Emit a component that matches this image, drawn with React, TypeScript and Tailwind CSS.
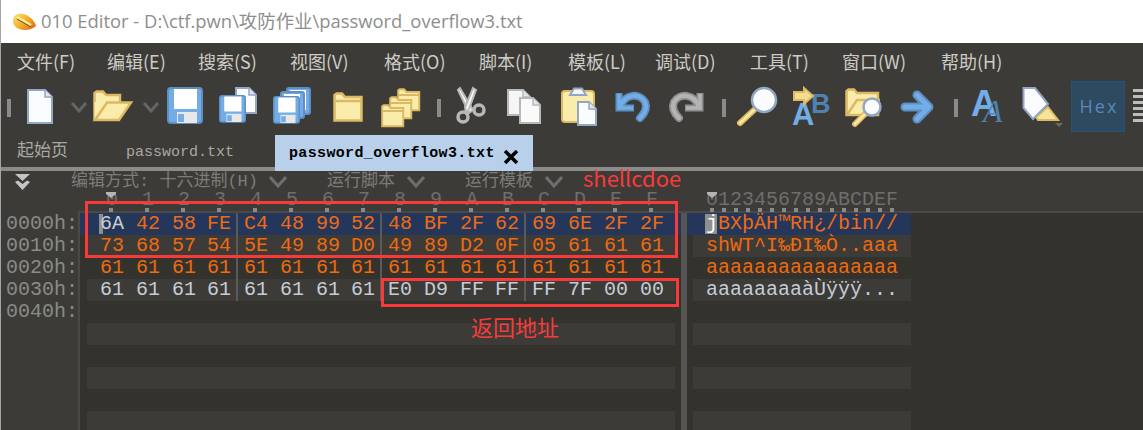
import React from 'react';

const menus = [
  { label: '文件(F)', w: 'w-[90px]' },
  { label: '编辑(E)', w: 'w-[91px]' },
  { label: '搜索(S)', w: 'w-[92px]' },
  { label: '视图(V)', w: 'w-[94px]' },
  { label: '格式(O)', w: 'w-[95px]' },
  { label: '脚本(I)', w: 'w-[89px]' },
  { label: '模板(L)', w: 'w-[87px]' },
  { label: '调试(D)', w: 'w-[95px]' },
  { label: '工具(T)', w: 'w-[92px]' },
  { label: '窗口(W)', w: 'w-[99px]' },
  { label: '帮助(H)', w: 'w-[70px]' },
];

const rows = [
  { addr: '0000h:', hex: '6A 42 58 FE C4 48 99 52 48 BF 2F 62 69 6E 2F 2F', ascii: 'jBXþÄH™RH¿/bin//' },
  { addr: '0010h:', hex: '73 68 57 54 5E 49 89 D0 49 89 D2 0F 05 61 61 61', ascii: 'shWT^I‰ÐI‰Ò..aaa' },
  { addr: '0020h:', hex: '61 61 61 61 61 61 61 61 61 61 61 61 61 61 61 61', ascii: 'aaaaaaaaaaaaaaaa' },
  { addr: '0030h:', hex: '61 61 61 61 61 61 61 61 E0 D9 FF FF FF 7F 00 00', ascii: 'aaaaaaaaàÙÿÿÿ...' },
  { addr: '0040h:', hex: '', ascii: '' },
  { addr: '', hex: '', ascii: '' },
  { addr: '', hex: '', ascii: '' },
  { addr: '', hex: '', ascii: '' },
  { addr: '', hex: '', ascii: '' },
  { addr: '', hex: '', ascii: '' },
];

const digits = '0123456789ABCDEF'.split('');
const mono = "font-['Liberation_Mono','Noto_Sans_CJK_SC',monospace]";

const BLUE = '#72ade8';
const BLUE_D = '#5e8fc0';
const YEL = '#faedab';
const YEL_D = '#dcb964';
const PAPER = '#fbfcff';
const PAPER_D = '#93a6c4';

const Icon: React.FC<{ w: number; className: string; children: React.ReactNode }> = ({ w, className, children }) => (
  <svg width={w} height={40} viewBox={`0 0 ${w} 40`} className={`shrink-0 overflow-visible ${className}`}>
    {children}
  </svg>
);

const Grip = ({ className }: { className: string }) => (
  <div className={`mt-[12px] h-[18px] w-[4px] shrink-0 bg-[#8a8a88] ${className}`} />
);

const Chevron = ({ className }: { className: string }) => (
  <Icon w={16} className={className}>
    <path d="M1 16 L8 24 L15 16" fill="none" stroke="#646462" strokeWidth="3" />
  </Icon>
);

const Disk = ({ x, y, s = 1 }: { x: number; y: number; s?: number }) => (
  <g transform={`translate(${x} ${y}) scale(${s})`}>
    <rect x="1" y="1" width="34" height="35" rx="3" fill={BLUE} stroke={BLUE_D} strokeWidth="2" />
    <rect x="7" y="2" width="23" height="20" fill="#fff" />
    <rect x="10" y="25" width="20" height="11" fill="#e8e8e8" />
    <rect x="11" y="27" width="6" height="8" fill={BLUE} />
  </g>
);

const Folder = ({ x, y, s = 1 }: { x: number; y: number; s?: number }) => (
  <path
    transform={`translate(${x} ${y}) scale(${s})`}
    d="M1.5 28.5 V3 L3.5 1.5 H9 L12 5 H28.5 V28.5 Z M1.5 9 H28.5"
    fill={YEL}
    stroke={YEL_D}
    strokeWidth="2.5"
  />
);

const Sheet = ({ x, y, w, h, fill, line }: { x: number; y: number; w: number; h: number; fill: string; line: string }) => (
  <g transform={`translate(${x} ${y})`}>
    <path d={`M1 1 H${w - 8} L${w - 1} 8 V${h - 1} H1 Z`} fill={fill} stroke={line} strokeWidth="2" />
    <path d={`M${w - 8} 1 V8 H${w - 1}`} fill="#dfe5ee" stroke={line} strokeWidth="1.5" />
  </g>
);

const Lens = ({ cx, cy, r, x1, y1, x2, y2 }: { cx: number; cy: number; r: number; x1: number; y1: number; x2: number; y2: number }) => (
  <g>
    <path d={`M${x1} ${y1} L${x2} ${y2}`} stroke={YEL_D} strokeWidth="6" strokeLinecap="round" />
    <path d={`M${x1} ${y1} L${x2} ${y2}`} stroke="#fbe79d" strokeWidth="3" strokeLinecap="round" />
    <circle cx={cx} cy={cy} r={r} fill={PAPER} stroke={PAPER_D} strokeWidth="2.5" />
  </g>
);

const Toolbar = () => (
  <div className="flex h-[56px] items-start pt-[8px]">
    <Grip className="ml-[6px]" />
    <Icon w={26} className="ml-[16px]">
      <Sheet x={0} y={2} w={26} h={35} fill={PAPER} line={PAPER_D} />
    </Icon>
    <Chevron className="ml-[18px]" />
    <Icon w={40} className="ml-[6px]">
      <path d="M1.5 33 V6 L3.5 4.5 H10 L13 8 H27 V15" fill={YEL} stroke={YEL_D} strokeWidth="2.5" />
      <path d="M1.5 33 V15 H27 V33 Z" fill={YEL} />
      <path d="M2 33 L14 15.5 H38 L26 33 Z" fill={YEL} stroke={YEL_D} strokeWidth="2.5" />
    </Icon>
    <Chevron className="ml-[10px]" />
    <Icon w={36} className="ml-[8px]">
      <Disk x={0} y={0} />
    </Icon>
    <Icon w={38} className="ml-[16px]">
      <Sheet x={16} y={0} w={22} h={27} fill={PAPER} line={PAPER_D} />
      <Disk x={0} y={8} s={0.75} />
    </Icon>
    <Icon w={38} className="ml-[16px]">
      <rect x="14" y="1" width="23" height="26" rx="2" fill={BLUE} stroke={BLUE_D} strokeWidth="2" />
      <rect x="17" y="3" width="16" height="20" fill="#fff" />
      <rect x="8" y="5" width="23" height="26" rx="2" fill={BLUE} stroke={BLUE_D} strokeWidth="2" />
      <rect x="11" y="7" width="16" height="20" fill="#fff" />
      <Disk x={0} y={9} s={0.75} />
    </Icon>
    <Icon w={30} className="ml-[22px]">
      <Folder x={0} y={5} />
    </Icon>
    <Icon w={40} className="ml-[18px]">
      <Folder x={16} y={1} s={0.78} />
      <Folder x={8} y={9} s={0.78} />
      <Folder x={0} y={17} s={0.78} />
    </Icon>
    <Grip className="ml-[16px]" />
    <Icon w={30} className="ml-[14px]">
      <path d="M3 3 L5 1 L18 23 L14 26 Z" fill="#f4f4f4" stroke="#b8b8b8" strokeWidth="2" />
      <path d="M18 1 L21 3 L14 22 L11 26 L10 20 Z" fill="#f4f4f4" stroke="#b8b8b8" strokeWidth="2" />
      <circle cx="8" cy="30" r="5" fill="none" stroke="#b8b8b8" strokeWidth="3.5" />
      <circle cx="24" cy="23" r="5" fill="none" stroke="#b8b8b8" strokeWidth="3.5" />
    </Icon>
    <Icon w={34} className="ml-[22px]">
      <Sheet x={0} y={2} w={24} h={27} fill="#f6f6f6" line="#b8b8b8" />
      <Sheet x={12} y={10} w={22} h={27} fill="#fafafa" line="#b8b8b8" />
    </Icon>
    <Icon w={36} className="ml-[20px]">
      <rect x="1" y="4" width="32" height="31" rx="3" fill={YEL} stroke={YEL_D} strokeWidth="2" />
      <path d="M9 8 L13 1.5 H21 L25 8 Z" fill="#f4f6fa" stroke={PAPER_D} strokeWidth="2" />
      <Sheet x={16} y={14} w={20} h={25} fill={PAPER} line={PAPER_D} />
    </Icon>
    <Icon w={35} className="ml-[18px]">
      <path d="M4 6 V21 H19" fill="none" stroke={BLUE_D} strokeWidth="7" />
      <path d="M5 20 C10 6 25 6 30 15 C33 22 29 27 25 31" fill="none" stroke={BLUE_D} strokeWidth="8" strokeLinecap="round" />
      <path d="M5 20 C10 6 25 6 30 15 C33 22 29 27 25 31" fill="none" stroke={BLUE} strokeWidth="4.5" strokeLinecap="round" />
      <path d="M4 7 V21 H18" fill="none" stroke={BLUE} strokeWidth="3.5" />
    </Icon>
    <Icon w={35} className="ml-[19px]">
      <path d="M31 6 V21 H16" fill="none" stroke="#8f8f8f" strokeWidth="7" />
      <path d="M30 20 C25 6 10 6 5 15 C2 22 6 27 10 31" fill="none" stroke="#8f8f8f" strokeWidth="8" strokeLinecap="round" />
      <path d="M30 20 C25 6 10 6 5 15 C2 22 6 27 10 31" fill="none" stroke="#b4b4b4" strokeWidth="4.5" strokeLinecap="round" />
      <path d="M31 7 V21 H17" fill="none" stroke="#b4b4b4" strokeWidth="3.5" />
    </Icon>
    <Grip className="ml-[18px]" />
    <Icon w={40} className="ml-[11px]">
      <Lens cx={27} cy={13} r={12} x1={17} y1={23} x2={3} y2={36} />
    </Icon>
    <Icon w={40} className="ml-[15px]">
      <text x="19" y="26" fontFamily="'Liberation Sans'" fontWeight="700" fontSize="27" fill="#4f81b2">B</text>
      <text x="0" y="38" fontFamily="'Liberation Sans'" fontWeight="700" fontSize="31" fill={BLUE}>A</text>
      <path d="M2 5 H12 V1 L21 9 L12 17 V13 H2 Z" fill="#f7dc8e" stroke={YEL_D} strokeWidth="2" />
    </Icon>
    <Icon w={37} className="ml-[13px]">
      <path d="M1.5 28 V4 L3.5 2.5 H9 L12 6 H33 V28 Z" fill={YEL} stroke={YEL_D} strokeWidth="2.5" />
      <path d="M2 28 L12 13 H35" fill="none" stroke={YEL_D} strokeWidth="2.5" />
      <Lens cx={27} cy={20} r={8.5} x1={20} y1={27} x2={10} y2={37} />
    </Icon>
    <Icon w={32} className="ml-[19px]">
      <path d="M4 20 H27 M16 8 L28 20 L16 32" fill="none" stroke={BLUE_D} strokeWidth="9" strokeLinecap="round" strokeLinejoin="round" />
      <path d="M4 20 H27 M16 8 L28 20 L16 32" fill="none" stroke={BLUE} strokeWidth="5" strokeLinecap="round" strokeLinejoin="round" />
    </Icon>
    <Grip className="ml-[21px]" />
    <Icon w={33} className="ml-[14px]">
      <text x="-1" y="29" fontFamily="'Liberation Sans'" fontWeight="700" fontSize="36" fill={BLUE}>A</text>
      <text x="11" y="35" fontFamily="'Liberation Serif'" fontStyle="italic" fontSize="32" fill="#4f81b2">A</text>
    </Icon>
    <Icon w={40} className="ml-[18px]">
      <path d="M25 20 L35 33 H15 L13 30 Z" fill="#f8e39b" stroke={YEL_D} strokeWidth="2" />
      <path d="M0.5 1 H12 L25 17 L10 32 L0.5 21 Z" fill={PAPER} stroke={PAPER_D} strokeWidth="2" />
      <path d="M32 36 H40 L36 40 Z" fill="#6a6a68" />
    </Icon>
    <div className="ml-[8px] -mt-[6px] flex h-[51px] w-[54px] shrink-0 items-center justify-center border border-[#24547c] bg-[#2e4a60] pl-[2px] font-['Open_Sans',sans-serif] text-[18px] tracking-[2px] text-[#5a87b8]">
      Hex
    </div>
    <div className="ml-[8px] mt-[2px] flex w-[10px] shrink-0 flex-col gap-[3px]">
      <div className="h-[3px] bg-[#bdbdbb]" />
      <div className="h-[3px] bg-[#bdbdbb]" />
      <div className="h-[3px] bg-[#bdbdbb]" />
      <div className="h-[3px] bg-[#bdbdbb]" />
      <div className="h-[3px] bg-[#bdbdbb]" />
      <div className="h-[3px] bg-[#bdbdbb]" />
    </div>
  </div>
);

const HeaderChevron = ({ className }: { className: string }) => (
  <svg width="18" height="12" viewBox="0 0 18 12" className={`shrink-0 ${className}`}>
    <path d="M1 1 L9 10 L17 1" fill="none" stroke="#6e6e6c" strokeWidth="3" />
  </svg>
);

const Marker = ({ left }: { left: string }) => (
  <svg width="10" height="6" viewBox="0 0 10 6" className={`absolute top-[1px] ${left}`}>
    <path d="M0 0 H10 V2 L5 6 L0 2 Z" fill="#b5b5b3" />
  </svg>
);

export default function App() {
  return (
    <div className="relative h-[430px] w-[1143px] overflow-hidden border-l border-[#a5a5a5] bg-[#3d3b37]">
      {/* title bar */}
      <div className="flex h-[43px] items-center bg-white pb-[1px]">
        <svg width="24" height="18" viewBox="0 0 24 18" className="ml-[11px] mt-[1px] shrink-0">
          <defs>
            <linearGradient id="logo" x1="0" y1="0" x2="1" y2="0.7">
              <stop offset="0" stopColor="#f9e37c" />
              <stop offset="0.55" stopColor="#f5b02c" />
              <stop offset="1" stopColor="#e2701c" />
            </linearGradient>
          </defs>
          <path d="M1 8 C1 2 6 0 11 1 C17 2 23 8 24 13 C20 17 12 18 7 16 C3 14 1 12 1 8 Z" fill="url(#logo)" />
          <path d="M5 4 L19 12" stroke="#f8ec9a" strokeWidth="2.5" />
          <path d="M5 6 L19 14" stroke="#6b5a10" strokeWidth="1" />
        </svg>
        <span className="ml-[5px] whitespace-pre font-['Open_Sans','Noto_Sans_CJK_SC',sans-serif] text-[18.4px] text-[#8e8e8e]">
          010 Editor - D:\ctf.pwn\攻防作业\password_overflow3.txt
        </span>
      </div>

      {/* menu */}
      <div className="flex h-[36px] items-center pl-[16px] font-['Noto_Sans_CJK_SC',sans-serif] text-[18px] text-[#cdcbc6]">
        {menus.map(m => (
          <span key={m.label} className={`${m.w} shrink-0 whitespace-nowrap`}>{m.label}</span>
        ))}
      </div>

      <Toolbar />

      {/* tabs */}
      <div className="relative flex h-[36px] items-start">
        <span className="ml-[16px] mt-[1px] w-[109px] shrink-0 font-['Noto_Sans_CJK_SC',sans-serif] text-[17px] text-[#a9a7a2]">起始页</span>
        <span className={`mt-[7px] w-[149px] shrink-0 text-[15px] text-[#a9a7a2] ${mono}`}>password.txt</span>
        <div className="z-10 flex h-[36px] w-[258px] shrink-0 items-start bg-[#b8d0ea] pl-[14px]">
          <span className={`mt-[8px] whitespace-pre text-[15px] font-bold tracking-[0.35px] text-black ${mono}`}>password_overflow3.txt</span>
          <svg width="16" height="14" viewBox="0 0 16 14" className="ml-[8px] mt-[15px] shrink-0">
            <path d="M2 1 L14 13 M14 1 L2 13" stroke="#000" strokeWidth="3.5" />
          </svg>
        </div>
        <div className="absolute bottom-0 left-0 h-[4px] w-full bg-[#8c8b88]" />
      </div>

      {/* hex header */}
      <div className="h-[42px]">
        <div className={`flex h-[20px] items-center pt-[1px] text-[17px] text-[#7d7c78] ${mono}`}>
          <svg width="15" height="16" viewBox="0 0 15 16" className="ml-[14px] shrink-0">
            <path d="M0 0 H15 L7.5 7 Z M0 8 L3 6.5 L7.5 10 L12 6.5 L15 8 L7.5 16 Z" fill="#c4c4c2" />
          </svg>
          <span className="ml-[41px] w-[186px] shrink-0 whitespace-pre">编辑方式: 十六进制(H)</span>
          <HeaderChevron className="ml-[12px]" />
          <span className="ml-[40px] w-[70px] shrink-0">运行脚本</span>
          <HeaderChevron className="ml-[10px]" />
          <span className="ml-[40px] w-[70px] shrink-0">运行模板</span>
          <HeaderChevron className="ml-[10px]" />
        </div>
        <div className={`flex h-[19px] text-[20px] leading-[17px] text-[#6e6e6c] ${mono}`}>
          <div className="ml-[93px] flex w-[576px] shrink-0">
            {digits.map((d, i) => (
              <span key={d} className="relative w-[36px] shrink-0 text-center">
                {d}
                {i === 0 && <Marker left="left-[12px]" />}
                <i className="absolute bottom-[-2px] left-[15px] h-[4px] w-[4px] bg-[#8a8a88]" />
              </span>
            ))}
          </div>
          <div className="ml-[36px] flex shrink-0">
            {digits.map((d, i) => (
              <span key={d} className="relative w-[12px] shrink-0 text-center">
                {d}
                {i === 0 && <Marker left="left-[1px]" />}
                <i className="absolute bottom-[-2px] left-[4px] h-[4px] w-[4px] bg-[#8a8a88]" />
              </span>
            ))}
          </div>
        </div>
        <div className="ml-[77px] mt-[1px] h-[2px] bg-[#4a4946]" />
      </div>

      {/* rows */}
      <div className={`text-[20px] leading-[19px] ${mono}`}>
        {rows.map((r, i) => {
          const selected = i === 0;
          const stripe = i % 2 === 1;
          const bytes = r.hex ? r.hex.split(' ') : [];
          const textColor = i === 3 ? 'text-[#c5ccd4]' : 'text-[#ee6a12]';
          return (
            <div key={i} className="flex h-[22px]">
              <div className="h-full w-[77px] shrink-0 pl-[5px] pt-[1px] text-[#8b8b87]">{r.addr}</div>
              <div className="h-full w-[2px] shrink-0 bg-[#4a4946]" />
              <div className={`h-full w-[7px] shrink-0 ${selected ? 'bg-[#24375a]' : 'bg-[#33322d]'}`} />
              <div className={`flex h-full w-[588px] shrink-0 pl-[7px] pt-[1px] ${selected ? 'bg-[#24375a]' : stripe ? 'bg-[#3c3b37]' : 'bg-[#33322d]'} ${textColor}`}>
                {bytes.map((b, j) => (
                  <span
                    key={j}
                    className={`relative -mt-[1px] h-[22px] w-[36px] shrink-0 pt-[1px] text-center ${j % 4 === 3 && j < 15 ? 'border-r-2 border-[#5a5a58]' : ''} ${selected && j === 0 ? 'text-[#c9cdd4]' : ''}`}
                  >
                    {selected && j === 0 && <i className="absolute left-[5px] top-[1px] h-[20px] w-[4px] bg-[#8f8f8f]" />}
                    <span className="relative">{b}</span>
                  </span>
                ))}
              </div>
              <div className={`h-full w-[6px] shrink-0 ${selected ? 'bg-[#24375a]' : 'bg-[#33322d]'}`} />
              <div className="h-full w-[6px] shrink-0 bg-[#555553]" />
              <div className={`h-full w-[6px] shrink-0 ${selected ? 'bg-[#24375a]' : 'bg-[#33322d]'}`} />
              <div className={`relative h-full w-[218px] shrink-0 whitespace-pre pl-[13px] pt-[1px] ${selected ? 'bg-[#24375a]' : stripe ? 'bg-[#3c3b37]' : 'bg-[#33322d]'} ${textColor}`}>
                {selected && <i className="absolute left-[12px] top-[1px] h-[20px] w-[12px] bg-[#8f8f8f]" />}
                {selected ? (
                  <span className="relative"><span className="text-white">j</span>{r.ascii.slice(1)}</span>
                ) : (
                  r.ascii
                )}
              </div>
              <div className="h-full flex-1 bg-[#33322d]" />
            </div>
          );
        })}
      </div>

      {/* red annotations */}
      <div className="absolute left-[84px] top-[201px] h-[57px] w-[593px] border-[3px] border-[#f83a3a]" />
      <div className="absolute left-[380px] top-[278px] h-[29px] w-[298px] border-[3px] border-[#f83a3a]" />
      <span className="absolute left-[582px] top-[165px] font-['Noto_Sans_CJK_SC',sans-serif] text-[22px] leading-[24px] text-[#f83a3a]">shellcdoe</span>
      <span className="absolute left-[470px] top-[310px] font-['Noto_Sans_CJK_SC',sans-serif] text-[22px] text-[#f83a3a]">返回地址</span>
    </div>
  );
}
